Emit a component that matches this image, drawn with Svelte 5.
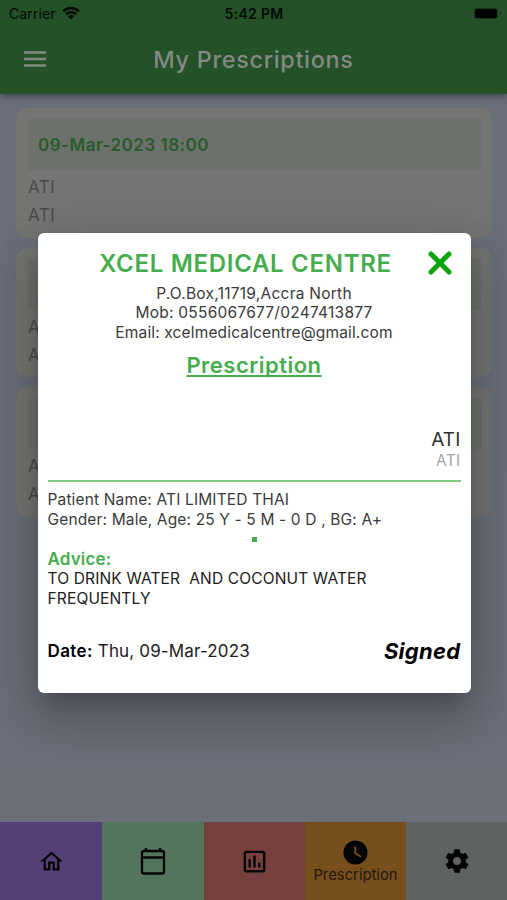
<script lang="ts">
	type Prescription = {
		date: string;
		doctor: string;
		clinic: string;
	};

	const prescriptions: Prescription[] = [
		{ date: '09-Mar-2023 18:00', doctor: 'ATI', clinic: 'ATI' },
		{ date: '', doctor: 'ATI', clinic: 'ATI' },
		{ date: '', doctor: 'ATI', clinic: 'ATI' }
	];

	let open = $state(true);
</script>

<div class="app">
	<header>
		<div class="status">
			<div class="carrier">
				<span>Carrier</span>
				<svg width="18" height="14" viewBox="0 0 18 14">
					<path d="M1.2 5.2a11.2 11.2 0 0 1 15.6 0M4 8.2a7.2 7.2 0 0 1 10 0" />
					<path class="fill" d="M9 13.6 5.9 10.3a4.6 4.6 0 0 1 6.2 0z" />
				</svg>
			</div>
			<span class="time">5:42 PM</span>
			<div class="battery"><i></i><b></b></div>
		</div>
		<div class="bar">
			<button class="menu" aria-label="Menu">
				<svg width="22" height="16" viewBox="0 0 22 16">
					<path d="M0 1.500h22M0 8h22M0 14.500h22" />
				</svg>
			</button>
			<h1>My Prescriptions</h1>
		</div>
	</header>

	<main>
		{#each prescriptions as item}
			<article class="card">
				<div class="card-date">{item.date}</div>
				<p>{item.doctor}</p>
				<p>{item.clinic}</p>
			</article>
		{/each}
	</main>

	<nav>
		<button class="home" aria-label="Home">
			<svg width="27" height="27" viewBox="0 0 24 24">
				<path d="m12 5.69 5 4.5V18h-2v-6H9v6H7v-7.81l5-4.5M12 3 2 12h3v8h6v-6h2v6h6v-8h3L12 3z" />
			</svg>
		</button>
		<button class="calendar" aria-label="Calendar">
			<svg width="26" height="28" viewBox="0 0 26 28">
				<rect x="2" y="4" width="22" height="22.500" rx="2" />
				<path d="M2 10.500h22M6 1v3M20 1v3" />
			</svg>
		</button>
		<button class="reports" aria-label="Reports">
			<svg width="29" height="29" viewBox="0 0 24 24">
				<path d="M9 17H7v-7h2v7zm4 0h-2V7h2v10zm4 0h-2v-4h2v4zm2 2H5V5h14v14zm0-16H5c-1.1 0-2 .9-2 2v14c0 1.1.9 2 2 2h14c1.1 0 2-.9 2-2V5c0-1.1-.9-2-2-2z" />
			</svg>
		</button>
		<button class="prescription">
			<svg width="29" height="29" viewBox="0 0 24 24">
				<path d="M12 2C6.5 2 2 6.500 2 12s4.500 10 10 10 10-4.500 10-10S17.500 2 12 2zm4.200 14.200L11 13V7h1.500v5.200l4.500 2.700-.8 1.300z" />
			</svg>
			<span>Prescription</span>
		</button>
		<button class="settings" aria-label="Settings">
			<svg width="28" height="28" viewBox="0 0 24 24">
				<path d="M19.430 12.980c.04-.32.07-.64.07-.98s-.03-.66-.07-.98l2.110-1.650c.19-.15.24-.42.12-.64l-2-3.460c-.12-.22-.39-.3-.61-.22l-2.490 1c-.52-.4-1.080-.73-1.690-.98l-.38-2.650C14.460 2.180 14.250 2 14 2h-4c-.25 0-.46.18-.49.42l-.38 2.650c-.61.25-1.170.59-1.690.98l-2.490-1c-.23-.09-.49 0-.61.22l-2 3.460c-.13.22-.07.49.12.64l2.110 1.650c-.04.32-.07.65-.07.98s.03.66.07.98l-2.110 1.650c-.19.15-.24.42-.12.64l2 3.460c.12.22.39.3.61.22l2.490-1c.52.4 1.080.73 1.690.98l.38 2.650c.03.24.24.42.49.42h4c.25 0 .46-.18.49-.42l.38-2.650c.61-.25 1.170-.59 1.690-.98l2.490 1c.23.09.49 0 .61-.22l2-3.460c.12-.22.07-.49-.12-.64l-2.110-1.650zM12 15.500c-1.930 0-3.500-1.570-3.500-3.500s1.570-3.500 3.500-3.500 3.500 1.570 3.500 3.500-1.570 3.500-3.500 3.500z" />
			</svg>
		</button>
	</nav>

	{#if open}
		<section class="dialog" role="dialog" aria-label="Prescription">
			<h2>XCEL MEDICAL CENTRE</h2>
			<button class="close" aria-label="Close" onclick={() => (open = false)}>
				<svg width="24" height="24" viewBox="0 0 24 24">
					<path d="m3 3 18 18M21 3 3 21" />
				</svg>
			</button>
			<div class="contact">
				<p class="address">P.O.Box,11719,Accra North</p>
				<p class="mobile">Mob: 0556067677/0247413877</p>
				<p class="email">Email: xcelmedicalcentre@gmail.com</p>
			</div>
			<h3>Prescription</h3>
			<div class="doctor">
				<strong>ATI</strong>
				<span>ATI</span>
			</div>
			<div class="patient">
				<p>Patient Name: ATI LIMITED THAI</p>
				<p>Gender: Male, Age: 25 Y - 5 M - 0 D , BG: A+</p>
			</div>
			<i class="dot"></i>
			<h4>Advice:</h4>
			<p class="advice">TO DRINK WATER&nbsp; AND COCONUT WATER FREQUENTLY</p>
			<footer>
				<p><b>Date:</b> Thu, 09-Mar-2023</p>
				<em>Signed</em>
			</footer>
		</section>
	{/if}
</div>

<style>
	:global(body) {
		background: #6a6f79;
	}

	.app {
		position: relative;
		display: flex;
		flex-direction: column;
		height: 900px;
		overflow: hidden;
		background: linear-gradient(#696e79, #6a6f78);
		font-family: Inter, 'Liberation Sans', sans-serif;
	}

	h1,
	h2,
	h3,
	h4,
	p {
		margin: 0;
	}

	button {
		padding: 0;
		border: 0;
		background: none;
		color: inherit;
		font: inherit;
	}

	header {
		position: relative;
		height: 94px;
		background: #245127;
		box-shadow: 0 2px 7px rgba(0, 0, 0, 0.4);
	}

	.status {
		display: grid;
		grid-template-columns: 1fr auto 1fr;
		align-items: center;
		height: 27px;
		padding: 0 6px 0 9px;
		color: #030a03;
		font-size: 14px;
	}

	.carrier {
		display: flex;
		align-items: center;
		gap: 6px;
		letter-spacing: 0.1px;
	}

	.carrier svg {
		margin-top: -2px;
		fill: none;
		stroke: #030a03;
		stroke-width: 2.6;
	}

	.carrier .fill {
		fill: #030a03;
		stroke: none;
	}

	.time {
		margin-right: 2px;
		font-weight: 600;
		letter-spacing: 0.3px;
	}

	.battery {
		display: flex;
		align-items: center;
		justify-content: flex-end;
		gap: 2px;
		margin-top: -1px;
	}

	.battery i {
		width: 22px;
		height: 9px;
		background: #000;
		border: 1px solid #17391a;
		border-radius: 3px;
	}

	.battery b {
		width: 1px;
		height: 4px;
		background: #17391a;
	}

	.bar {
		display: grid;
		grid-template-columns: 46px 1fr 46px;
		align-items: center;
		height: 64px;
	}

	.menu {
		display: flex;
		margin-left: 24px;
	}

	.menu path {
		stroke: #808b80;
		stroke-width: 2.600;
	}

	h1 {
		color: #838984;
		font-size: 23.500px;
		font-weight: 450;
		letter-spacing: 0.65px;
		text-align: center;
	}

	main {
		display: grid;
		flex: 1;
		align-content: start;
		gap: 10px;
		padding: 14px 15px 0 16px;
	}

	.card {
		height: 118.500px;
		padding: 11px 11px 0 12px;
		background: #757575;
		border-radius: 12px;
		box-shadow: inset 0 0 7px 3px #74756f;
		color: #4b4b4b;
		font-size: 17px;
		letter-spacing: 0.5px;
		line-height: 28px;
	}

	.card-date {
		height: 51px;
		margin-bottom: 3px;
		padding-left: 10px;
		background: #6d716b;
		color: #275b2b;
		font-weight: 600;
		line-height: 52px;
	}

	nav {
		display: grid;
		grid-template-columns: 102px 101.500px 101.500px 101px 1fr;
		height: 78px;
	}

	nav button {
		display: flex;
		flex-direction: column;
		align-items: center;
		justify-content: center;
	}

	nav svg {
		fill: #050505;
	}

	.home {
		background: #543f76;
	}

	.calendar {
		background: #55745d;
	}

	.calendar svg {
		fill: none;
		stroke: #050505;
		stroke-width: 2.300;
	}

	.reports {
		background: #75403e;
	}

	.prescription {
		background: #774f1d;
		color: #24180a;
		font-size: 14.800px;
		line-height: 17px;
	}

	.settings {
		background: #5d6363;
	}

	.dialog {
		position: absolute;
		top: 233px;
		left: 37.500px;
		box-sizing: border-box;
		width: 433px;
		height: 460px;
		padding: 14px 10px 0;
		background: #fff;
		border-radius: 6px;
		box-shadow:
			0 13px 18px -8px rgba(0, 0, 0, 0.2),
			0 28px 46px 4px rgba(0, 0, 0, 0.15),
			0 10px 55px 8px rgba(0, 0, 0, 0.12);
		color: #3a3a3a;
		font-size: 15.500px;
		letter-spacing: 0.15px;
		line-height: 19.500px;
	}

	h2 {
		padding-top: 1px;
		padding-right: 17px;
		color: #46ad4e;
		font-size: 24px;
		font-weight: 600;
		letter-spacing: 0.7px;
		line-height: 32px;
		text-align: center;
		white-space: nowrap;
	}

	.close {
		position: absolute;
		top: 18px;
		right: 18.500px;
		width: 24px;
		height: 24px;
	}

	.close path {
		fill: none;
		stroke: #0da50f;
		stroke-linecap: round;
		stroke-width: 5;
	}

	.contact {
		margin-top: 3.500px;
		text-align: center;
	}

	.address,
	.mobile {
		letter-spacing: 0.25px;
	}

	h3 {
		margin-top: 9px;
		color: #46ad4e;
		font-size: 22px;
		font-weight: 600;
		letter-spacing: 0.5px;
		line-height: 28px;
		text-align: center;
		text-decoration: underline;
		text-decoration-thickness: 2px;
		text-underline-offset: 2px;
		text-decoration-skip-ink: none;
	}

	.doctor {
		display: grid;
		margin-top: 49px;
		padding-bottom: 9.500px;
		border-bottom: 2px solid #82ca86;
		text-align: right;
	}

	.doctor strong {
		color: #303030;
		font-size: 19px;
		font-weight: 400;
		line-height: 24px;
	}

	.doctor span {
		color: #a5a5a5;
		letter-spacing: 0.3px;
		line-height: 18px;
	}

	.patient {
		margin-top: 8.500px;
	}

	.dot {
		display: block;
		width: 5px;
		height: 5px;
		margin: 7.500px auto 8px;
		background: #46ad4e;
	}

	h4 {
		color: #46ad4e;
		font-size: 17px;
		font-weight: 600;
		letter-spacing: 0.15px;
	}

	.advice {
		width: 350px;
		color: #202020;
	}

	footer {
		display: flex;
		align-items: center;
		justify-content: space-between;
		margin-top: 30px;
		color: #202020;
		font-size: 17px;
		line-height: 26px;
	}

	footer b {
		color: #000;
		font-weight: 600;
		letter-spacing: 0.4px;
	}

	footer em {
		color: #000;
		font-size: 22px;
		font-weight: 700;
		letter-spacing: 0.3px;
	}
</style>
